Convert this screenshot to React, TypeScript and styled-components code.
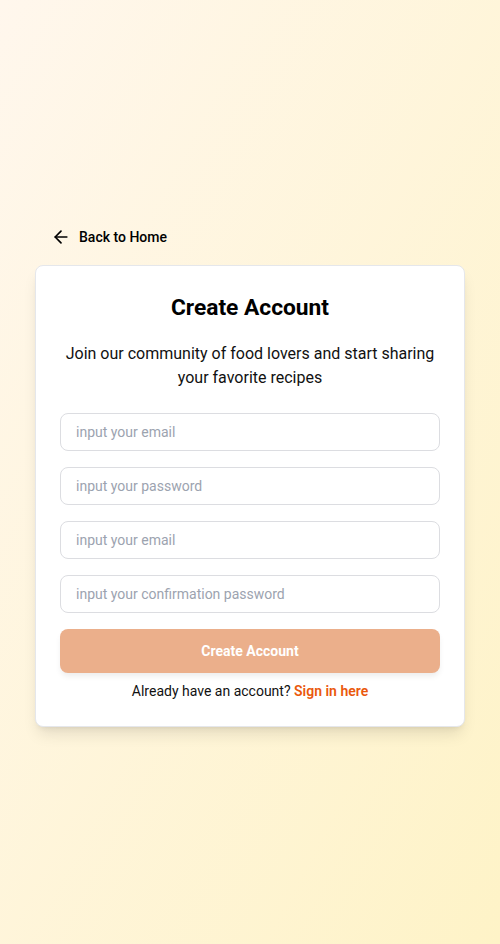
import React from "react";
import styled, { createGlobalStyle } from "styled-components";

const Global = createGlobalStyle`
  * { box-sizing: border-box; }
  html, body { margin: 0; padding: 0; }
  body {
    font-family: Roboto, "Liberation Sans", Arial, sans-serif;
    color: #111;
  }
`;

const Page = styled.div`
  min-height: 100vh;
  display: flex;
  align-items: center;
  justify-content: center;
  background: linear-gradient(to bottom right, #fff7ed, #fef3c7);
  padding: 5px 35px 0;
`;

const Column = styled.div`
  width: 430px;
  display: flex;
  flex-direction: column;
  gap: 14px;
`;

const BackLink = styled.a`
  display: inline-flex;
  align-items: center;
  gap: 8px;
  align-self: flex-start;
  padding: 4px 16px;
  font-size: 14px;
  font-weight: 500;
  line-height: 20px;
  color: #000;
  text-decoration: none;
  cursor: pointer;
`;

const Card = styled.div`
  background: #fff;
  border: 1px solid #e5e7eb;
  border-radius: 8px;
  box-shadow: 0 10px 15px -3px rgba(0,0,0,0.1), 0 4px 6px -4px rgba(0,0,0,0.1);
  padding: 24px;
  display: flex;
  flex-direction: column;
`;

const Title = styled.h1`
  margin: 2px 0 0;
  text-align: center;
  font-size: 22.75px;
  line-height: 32px;
  font-weight: 700;
  color: #000;
`;

const Subtitle = styled.p`
  margin: 18px 0 23px;
  text-align: center;
  font-size: 16px;
  line-height: 24px;
  color: #111;
`;

const Form = styled.form`
  display: flex;
  flex-direction: column;
  gap: 16px;
`;

const Input = styled.input`
  height: 38px;
  width: 100%;
  border: 1px solid #dcdde1;
  border-radius: 8px;
  padding: 0 15px;
  font-family: inherit;
  font-size: 14px;
  color: #111;
  background: #fff;
  outline: none;
  &::placeholder { color: #9ca3af; }
`;

const Submit = styled.button`
  height: 44px;
  width: 100%;
  border: none;
  border-radius: 8px;
  background: #ebaf8b;
  color: #fff;
  font-family: inherit;
  font-size: 14px;
  font-weight: 700;
  box-shadow: 0 4px 6px -1px rgba(0,0,0,0.08);
  cursor: pointer;
`;

const Footer = styled.p`
  margin: 8px 0 1px;
  text-align: center;
  font-size: 14px;
  line-height: 20px;
  color: #111;
`;

const SignIn = styled.a`
  color: #ea580c;
  font-weight: 600;
  text-decoration: none;
`;

const ArrowLeft = () => (
  <svg width="20" height="20" viewBox="0 0 24 24" fill="none" stroke="currentColor" strokeWidth="2" strokeLinecap="round" strokeLinejoin="round">
    <path d="m12 19-7-7 7-7" />
    <path d="M19 12H5" />
  </svg>
);

export default function App() {
  return (
    <>
      <Global />
      <Page>
        <Column>
          <BackLink>
            <ArrowLeft />
            Back to Home
          </BackLink>
          <Card>
            <Title>Create Account</Title>
            <Subtitle>Join our community of food lovers and start sharing your favorite recipes</Subtitle>
            <Form onSubmit={(e) => e.preventDefault()}>
              <Input type="email" placeholder="input your email" />
              <Input type="password" placeholder="input your password" />
              <Input type="email" placeholder="input your email" />
              <Input type="password" placeholder="input your confirmation password" />
              <Submit type="submit" disabled>Create Account</Submit>
            </Form>
            <Footer>
              Already have an account? <SignIn>Sign in here</SignIn>
            </Footer>
          </Card>
        </Column>
      </Page>
    </>
  );
}
